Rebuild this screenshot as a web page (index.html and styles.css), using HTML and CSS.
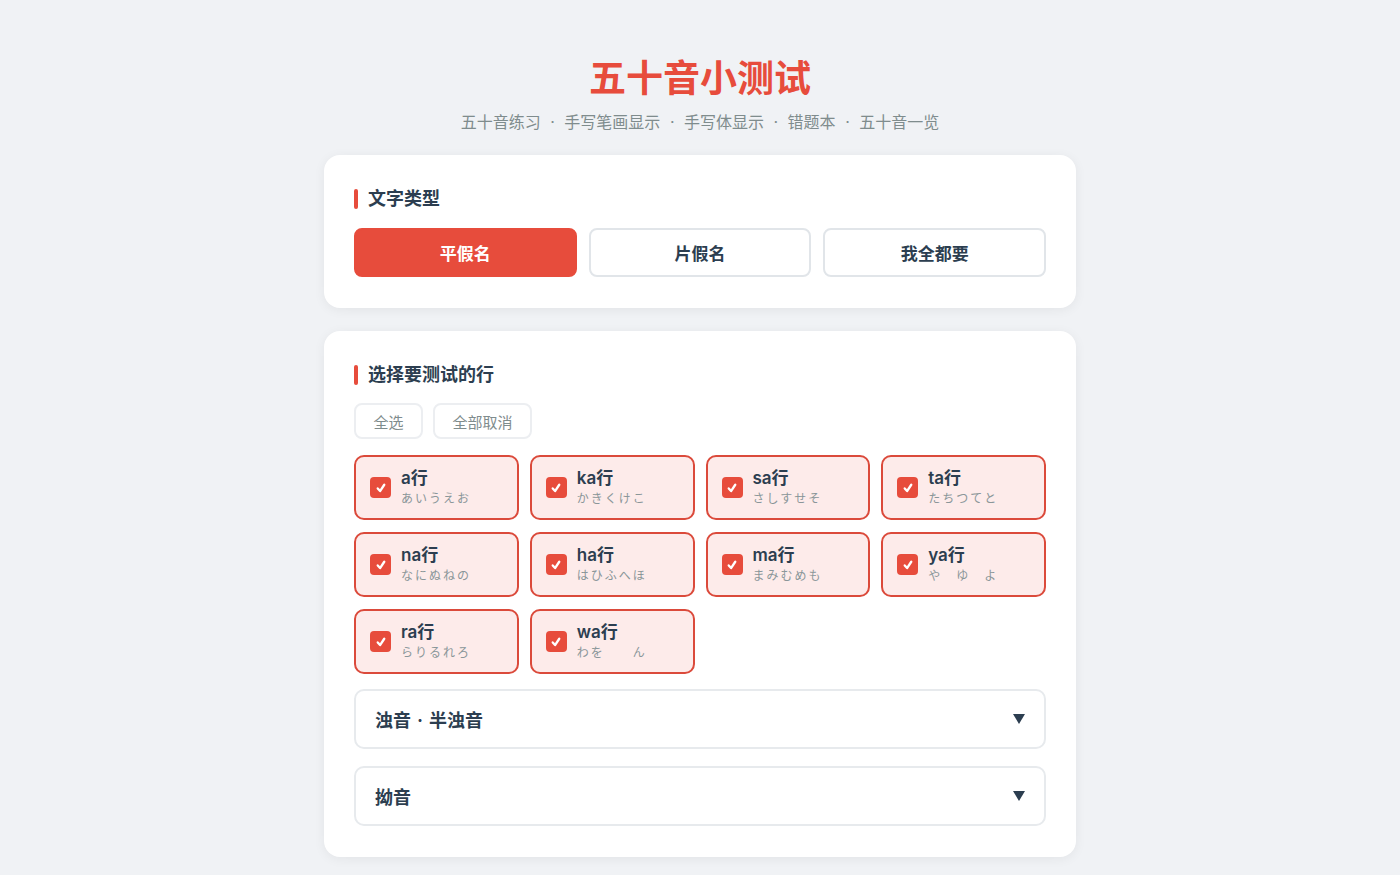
FILE: index.html
```html
<!DOCTYPE html>
<html lang="zh-CN">
<head>
<meta charset="UTF-8">
<title>五十音小测试</title>
<link rel="stylesheet" href="styles.css">
</head>
<body>
<div class="wrap">
  <h1 class="title">五十音小测试</h1>
  <p class="subtitle">五十音练习<span class="sep">·</span>手写笔画显示<span class="sep">·</span>手写体显示<span class="sep">·</span>错题本<span class="sep">·</span>五十音一览</p>

  <section class="card">
    <h2 class="sec-title">文字类型</h2>
    <div class="type-row">
      <button class="type-btn active">平假名</button>
      <button class="type-btn">片假名</button>
      <button class="type-btn">我全都要</button>
    </div>
  </section>

  <section class="card card2">
    <h2 class="sec-title">选择要测试的行</h2>
    <div class="tool-row">
      <button class="tool-btn">全选</button>
      <button class="tool-btn">全部取消</button>
    </div>
    <div class="grid">
      <label class="cell"><span class="cb"><svg viewBox="0 0 12 12"><path d="M3.2 6.4 L5.2 8.6 L8.8 3.2" /></svg></span><span class="txt"><span class="lbl">a行</span><span class="kana">あいうえお</span></span></label>
      <label class="cell"><span class="cb"><svg viewBox="0 0 12 12"><path d="M3.2 6.4 L5.2 8.6 L8.8 3.2" /></svg></span><span class="txt"><span class="lbl">ka行</span><span class="kana">かきくけこ</span></span></label>
      <label class="cell"><span class="cb"><svg viewBox="0 0 12 12"><path d="M3.2 6.4 L5.2 8.6 L8.8 3.2" /></svg></span><span class="txt"><span class="lbl">sa行</span><span class="kana">さしすせそ</span></span></label>
      <label class="cell"><span class="cb"><svg viewBox="0 0 12 12"><path d="M3.2 6.4 L5.2 8.6 L8.8 3.2" /></svg></span><span class="txt"><span class="lbl">ta行</span><span class="kana">たちつてと</span></span></label>
      <label class="cell"><span class="cb"><svg viewBox="0 0 12 12"><path d="M3.2 6.4 L5.2 8.6 L8.8 3.2" /></svg></span><span class="txt"><span class="lbl">na行</span><span class="kana">なにぬねの</span></span></label>
      <label class="cell"><span class="cb"><svg viewBox="0 0 12 12"><path d="M3.2 6.4 L5.2 8.6 L8.8 3.2" /></svg></span><span class="txt"><span class="lbl">ha行</span><span class="kana">はひふへほ</span></span></label>
      <label class="cell"><span class="cb"><svg viewBox="0 0 12 12"><path d="M3.2 6.4 L5.2 8.6 L8.8 3.2" /></svg></span><span class="txt"><span class="lbl">ma行</span><span class="kana">まみむめも</span></span></label>
      <label class="cell"><span class="cb"><svg viewBox="0 0 12 12"><path d="M3.2 6.4 L5.2 8.6 L8.8 3.2" /></svg></span><span class="txt"><span class="lbl">ya行</span><span class="kana">や　ゆ　よ</span></span></label>
      <label class="cell"><span class="cb"><svg viewBox="0 0 12 12"><path d="M3.2 6.4 L5.2 8.6 L8.8 3.2" /></svg></span><span class="txt"><span class="lbl">ra行</span><span class="kana">らりるれろ</span></span></label>
      <label class="cell"><span class="cb"><svg viewBox="0 0 12 12"><path d="M3.2 6.4 L5.2 8.6 L8.8 3.2" /></svg></span><span class="txt"><span class="lbl">wa行</span><span class="kana">わを　　ん</span></span></label>
    </div>
    <div class="fold">
      <span class="fold-title">浊音<span class="sep">·</span>半浊音</span>
      <svg class="arrow" viewBox="0 0 12 10"><path d="M0 0 H12 L6 10 Z" /></svg>
    </div>
    <div class="fold">
      <span class="fold-title">拗音</span>
      <svg class="arrow" viewBox="0 0 12 10"><path d="M0 0 H12 L6 10 Z" /></svg>
    </div>
  </section>
</div>
</body>
</html>
```

FILE: styles.css
```css
* { box-sizing: border-box; }
html, body { margin: 0; padding: 0; }
body {
  background: #f0f2f5;
  font-family: "Inter", "Noto Sans CJK SC", sans-serif;
  color: #2c3e50;
}
.wrap {
  width: 752px;
  margin: 0 auto;
  padding-top: 57px;
  padding-bottom: 20px;
}
.title {
  margin: 0;
  text-align: center;
  font-size: 37px;
  line-height: 44px;
  font-weight: 700;
  color: #e74c3c;
}
.subtitle {
  margin: 9px 0 0;
  text-align: center;
  font-size: 16px;
  line-height: 24px;
  color: #7f8c8d;
}
.sep {
  padding: 0 9.5px;
}
.card {
  margin-top: 21px;
  background: #fff;
  border-radius: 16px;
  box-shadow: 0 2px 12px rgba(0, 0, 0, 0.06);
  padding: 32px 30px 31px;
}
.card2 { margin-top: 23px; }
.sec-title {
  margin: 0;
  font-size: 18px;
  line-height: 24px;
  font-weight: 700;
  color: #2c3e50;
  display: flex;
  align-items: center;
  gap: 10px;
}
.sec-title::before {
  content: "";
  width: 4px;
  height: 20px;
  border-radius: 2px;
  background: #e74c3c;
}
.type-row {
  margin-top: 17px;
  display: grid;
  grid-template-columns: repeat(3, 1fr);
  gap: 12px;
}
.type-btn {
  height: 49px;
  border: 2px solid #e1e5e9;
  border-radius: 8px;
  background: #fff;
  font-family: inherit;
  font-size: 17px;
  font-weight: 700;
  color: #2c3e50;
}
.type-btn.active {
  background: #e74c3c;
  border-color: #e74c3c;
  color: #fff;
}
.tool-row {
  margin-top: 16px;
  display: flex;
  gap: 10px;
}
.tool-btn {
  height: 36px;
  padding: 0 17.5px;
  border: 2px solid #eceef1;
  border-radius: 8px;
  background: #fff;
  font-family: inherit;
  font-size: 15px;
  color: #7f8c8d;
}
.grid {
  margin-top: 16px;
  display: grid;
  grid-template-columns: repeat(4, 1fr);
  gap: 12px 11px;
}
.cell {
  height: 65px;
  border: 2px solid #db4a3b;
  border-radius: 10px;
  background: #fdebea;
  display: flex;
  align-items: center;
  padding: 0 14px;
  gap: 10px;
}
.cb {
  width: 21px;
  height: 21px;
  border-radius: 4px;
  background: #e74c3c;
  display: flex;
  align-items: center;
  justify-content: center;
  flex: none;
}
.cb svg {
  width: 14px;
  height: 14px;
  fill: none;
  stroke: #fff;
  stroke-width: 2;
  stroke-linecap: round;
  stroke-linejoin: round;
}
.txt {
  display: flex;
  flex-direction: column;
}
.lbl {
  font-size: 17px;
  line-height: 22px;
  font-weight: 600;
  color: #2c3e50;
}
.kana {
  font-size: 12px;
  line-height: 19px;
  letter-spacing: 2px;
  color: #8a9699;
}
.fold {
  margin-top: 15px;
  height: 60px;
  border: 2px solid #e7eaed;
  border-radius: 10px;
  display: flex;
  align-items: center;
  justify-content: space-between;
  padding: 0 19px;
}
.fold + .fold { margin-top: 17px; }
.fold-title {
  font-size: 18px;
  font-weight: 700;
  color: #2c3e50;
}
.fold-title .sep { padding: 0 6px; }
.arrow {
  width: 12px;
  height: 10px;
  fill: #2c3e50;
}
```
